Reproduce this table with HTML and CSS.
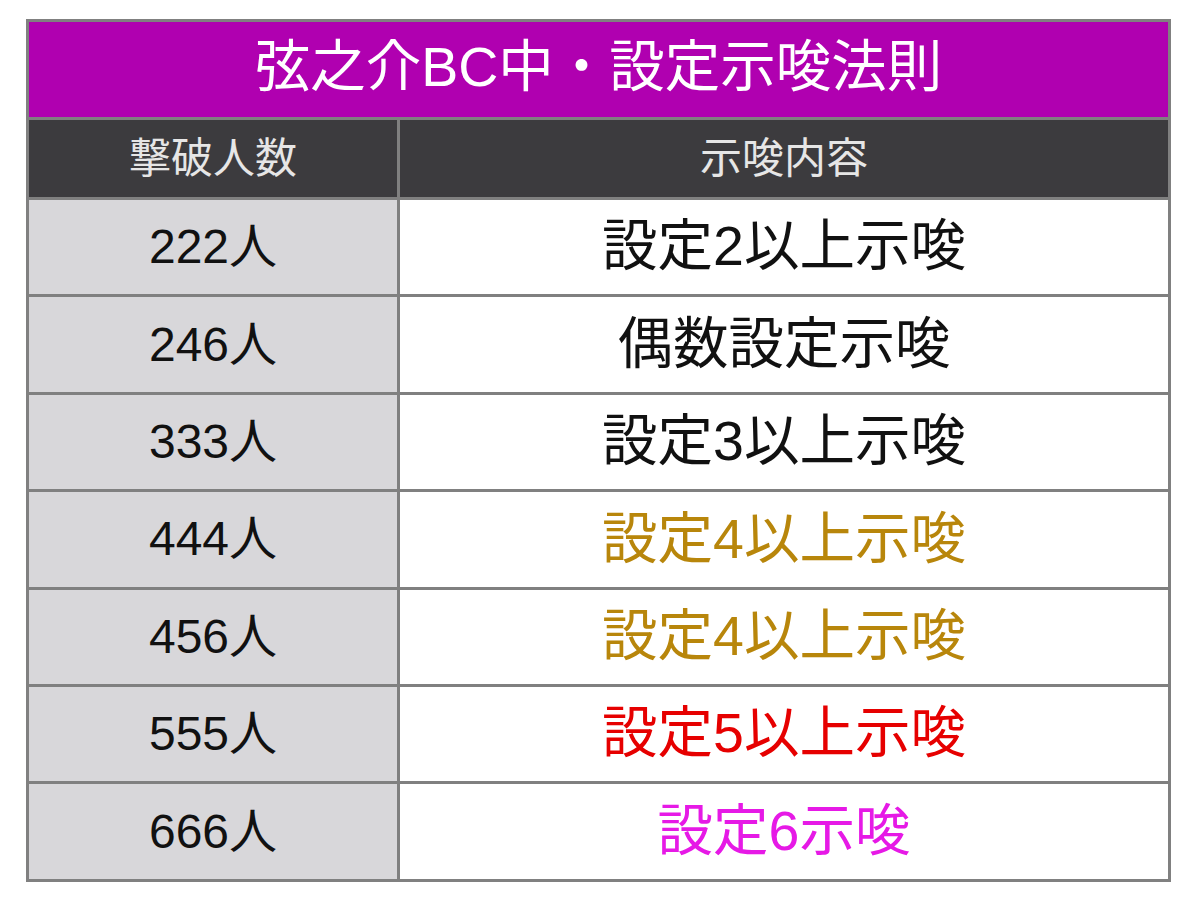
FILE: index.html
```html
<!DOCTYPE html>
<html lang="ja">
<head>
<meta charset="utf-8">
<title>弦之介BC中・設定示唆法則</title>
<link rel="stylesheet" href="styles.css">
</head>
<body>
<div class="table">
  <div class="title">弦之介BC中・設定示唆法則</div>
  <div class="head">撃破人数</div>
  <div class="head">示唆内容</div>
  <div class="key">222人</div>
  <div class="val">設定2以上示唆</div>
  <div class="key">246人</div>
  <div class="val">偶数設定示唆</div>
  <div class="key">333人</div>
  <div class="val">設定3以上示唆</div>
  <div class="key">444人</div>
  <div class="val gold">設定4以上示唆</div>
  <div class="key">456人</div>
  <div class="val gold">設定4以上示唆</div>
  <div class="key">555人</div>
  <div class="val red">設定5以上示唆</div>
  <div class="key">666人</div>
  <div class="val pink">設定6示唆</div>
</div>
</body>
</html>
```
FILE: styles.css
```css
html, body {
  margin: 0;
  padding: 0;
  background: #ffffff;
}
body {
  padding: 19px 0 0 26px;
  font-family: "Liberation Sans", "Noto Sans CJK JP", sans-serif;
}
.table {
  width: 1145px;
  box-sizing: border-box;
  display: grid;
  grid-template-columns: 368px 768px;
  grid-template-rows: 95px 77px repeat(7, 94.4px);
  gap: 3px;
  padding: 3px;
  background: #808080;
}
.table > div {
  display: flex;
  align-items: center;
  justify-content: center;
  line-height: 1;
}
.title {
  grid-column: 1 / 3;
  background: #b000b0;
  color: #ffffff;
  font-size: 55.5px;
  padding-bottom: 3px;
}
.head {
  background: #3c3b3e;
  color: #e6e6e6;
  font-size: 42px;
}
.key {
  background: #d8d7da;
  color: #111111;
  font-size: 48px;
}
.val {
  background: #ffffff;
  color: #111111;
  font-size: 55.5px;
}
.gold { color: #b8860b; }
.red { color: #e60000; }
.pink { color: #e619e6; }
```
